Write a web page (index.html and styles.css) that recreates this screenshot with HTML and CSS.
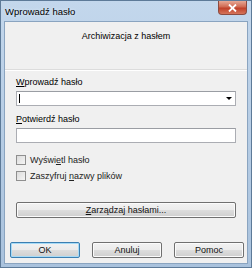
FILE: index.html
```html
<!DOCTYPE html>
<html lang="pl">
<head>
    <meta charset="UTF-8">
    <title>Wprowadź hasło</title>
    <link rel="stylesheet" href="styles.css">
</head>
<body>

    <div class="window">
        <div class="titlebar">
            <span class="title">Wprowadź hasło</span>
            <span class="close">
                <svg width="9" height="8" viewBox="0 0 9 8">
                    <path d="M1 0.5 L8 7.5 M8 0.5 L1 7.5" stroke="#fff" stroke-width="1.8"/>
                </svg>
            </span>
        </div>

        <div class="client">
            <div class="header">Archiwizacja z hasłem</div>

            <div class="form">
                <div class="label"><u>W</u>prowadź hasło</div>
                <div class="combo">
                    <span class="cursor"></span>
                    <span class="caret"></span>
                </div>

                <div class="label"><u>P</u>otwierdź hasło</div>
                <div class="field"></div>

                <div class="checks">
                    <div class="check"><span class="box"></span><span>Wyświ<u>e</u>tl hasło</span></div>
                    <div class="check"><span class="box"></span><span>Zaszyfruj <u>n</u>azwy plików</span></div>
                </div>

                <div class="btn wide"><span><u>Z</u>arządzaj hasłami...</span></div>
            </div>

            <div class="footer">
                <div class="btn default">OK</div>
                <div class="btn">Anuluj</div>
                <div class="btn">Pomoc</div>
            </div>
        </div>
    </div>

</body>
</html>
```

FILE: styles.css
```css
body {
    margin: 0;
    padding: 0;
    font-family: "Liberation Sans", Arial, sans-serif;
    font-size: 9px;
    color: #000;
    background: #fff;
}

.window {
    width: 252px;
    height: 268px;
    box-sizing: border-box;
    background: linear-gradient(#c3d7ec, #a9c2dd);
    border: 1px solid #5d7a98;
    padding: 0 3px 3px 3px;
    display: flex;
    flex-direction: column;
}

.titlebar {
    height: 20px;
    display: flex;
    align-items: flex-start;
    justify-content: space-between;
}

.title {
    font-size: 9.5px;
    margin: 5px 0 0 1px;
    text-shadow: 0 0 3px #e8f1fa;
}

.close {
    width: 29px;
    height: 14px;
    margin-right: 1px;
    border: 1px solid #8c4b40;
    border-top: none;
    border-radius: 0 0 4px 4px;
    background: linear-gradient(#e7a996, #d06a52 45%, #c0412a 55%, #d5755b);
    display: flex;
    align-items: center;
    justify-content: center;
    box-sizing: border-box;
}

.client {
    flex: 1;
    background: #f0f0f0;
    border: 1px solid #8aa4c0;
    display: flex;
    flex-direction: column;
}

.header {
    height: 48px;
    text-align: center;
    padding-top: 9px;
    box-sizing: border-box;
    border-bottom: 1px solid #dcdcdc;
    box-shadow: 0 1px 0 #fff;
}

.form {
    padding: 7px 11px 0 11px;
    display: flex;
    flex-direction: column;
}

.label {
    height: 11px;
    margin-bottom: 3px;
}

.combo,
.field {
    height: 15px;
    box-sizing: border-box;
    background: #fff;
    border: 1px solid #abadb3;
    border-top-color: #9a9da3;
    margin-bottom: 8px;
    position: relative;
}

.cursor {
    position: absolute;
    left: 2px;
    top: 2px;
    width: 1px;
    height: 9px;
    background: #000;
}

.caret {
    position: absolute;
    right: 3px;
    top: 5px;
    border-left: 3px solid transparent;
    border-right: 3px solid transparent;
    border-top: 3px solid #000;
}

.checks {
    margin-top: 4px;
    display: flex;
    flex-direction: column;
    gap: 6px;
}

.check {
    display: flex;
    align-items: center;
    height: 10px;
    color: #222;
}

.box {
    width: 8px;
    height: 8px;
    border: 1px solid #8f8f8f;
    background: linear-gradient(135deg, #dcdcdc, #f4f4f4);
    margin-right: 4px;
}

.btn {
    height: 16px;
    box-sizing: border-box;
    border: 1px solid #707070;
    border-radius: 2px;
    background: linear-gradient(#f2f2f2 0%, #ebebeb 50%, #dddddd 51%, #cfcfcf 100%);
    box-shadow: inset 0 0 0 1px #fbfbfb;
    display: flex;
    align-items: center;
    justify-content: center;
    color: #111;
}

.wide {
    margin-top: 21px;
}

.footer {
    margin-top: auto;
    padding: 0 3px 5px 5px;
    display: flex;
    gap: 12px;
}

.footer .btn {
    width: 70px;
}

.footer .default {
    border-color: #3c7fb1;
    box-shadow: inset 0 0 0 1px #a6dbf7;
}
```
